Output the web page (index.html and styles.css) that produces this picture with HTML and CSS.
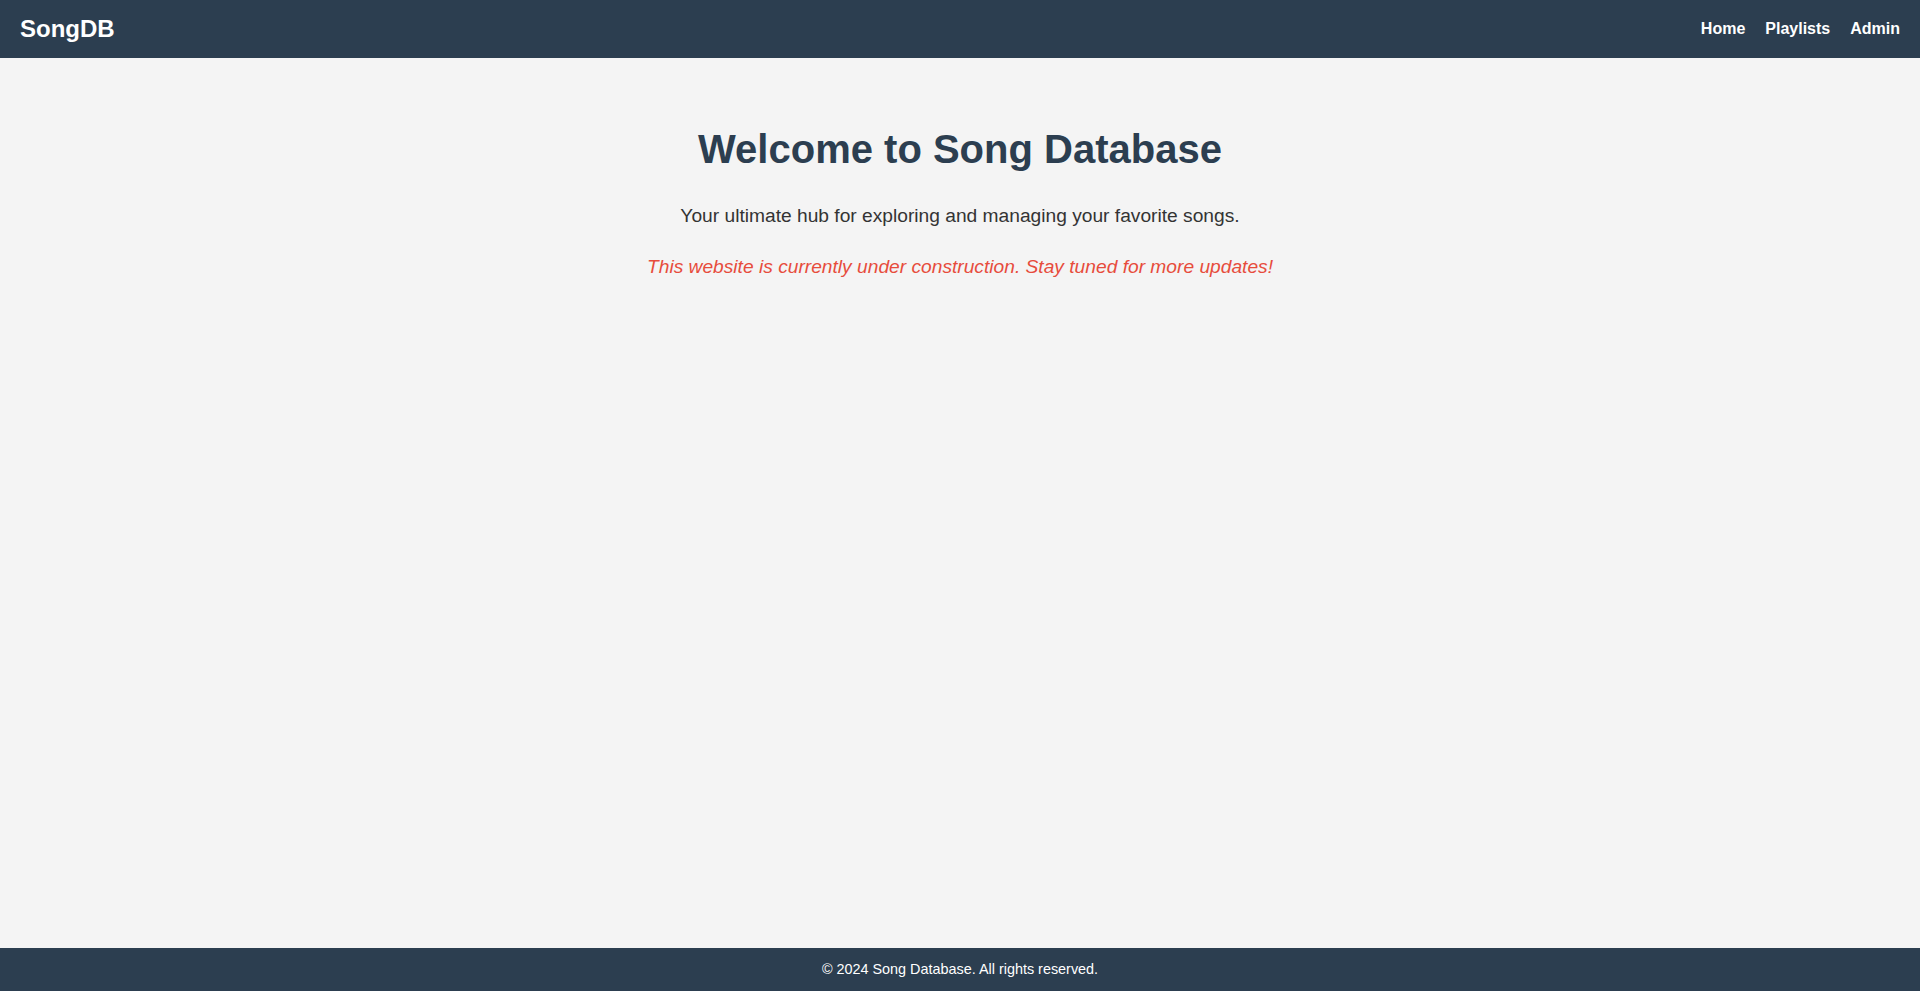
FILE: index.html
```html
<!DOCTYPE html>
<html lang="en">
<head>
<meta charset="utf-8">
<title>SongDB</title>
<link rel="stylesheet" href="styles.css">
</head>
<body>
<header class="site-header">
  <div class="brand">SongDB</div>
  <nav class="nav">
    <a href="#" class="nav-link">Home</a>
    <a href="#" class="nav-link">Playlists</a>
    <a href="#" class="nav-link">Admin</a>
  </nav>
</header>
<main class="main">
  <section class="hero">
    <h1 class="hero-title">Welcome to Song Database</h1>
    <p class="hero-sub">Your ultimate hub for exploring and managing your favorite songs.</p>
    <p class="hero-note">This website is currently under construction. Stay tuned for more updates!</p>
  </section>
</main>
<footer class="site-footer">
  <p class="footer-text">&copy; 2024 Song Database. All rights reserved.</p>
</footer>
</body>
</html>
```

FILE: styles.css
```css
html, body {
  margin: 0;
  padding: 0;
}
body {
  font-family: "Liberation Sans", Arial, sans-serif;
  background: #f4f4f4;
  color: #333;
  line-height: 1.6;
  min-height: 100vh;
  display: flex;
  flex-direction: column;
}
.site-header {
  background: #2c3e50;
  color: #fff;
  height: 58px;
  padding: 0 20px;
  display: flex;
  align-items: center;
  justify-content: space-between;
  box-sizing: border-box;
}
.brand {
  font-size: 24px;
  font-weight: bold;
  line-height: 1;
}
.nav {
  display: flex;
  gap: 20px;
}
.nav-link {
  color: #fff;
  text-decoration: none;
  font-weight: bold;
  font-size: 16px;
  line-height: 1;
}
.main {
  flex: 1;
  padding: 59px 20px 0;
}
.hero {
  text-align: center;
}
.hero-title {
  margin: 0 0 20px;
  font-size: 40px;
  color: #2c3e50;
  line-height: 1.6;
}
.hero-sub {
  margin: 0 0 20px;
  font-size: 19.2px;
}
.hero-note {
  margin: 0;
  font-size: 19.2px;
  font-style: italic;
  color: #e74c3c;
}
.site-footer {
  background: #2c3e50;
  color: #fff;
  text-align: center;
  padding: 10px 0;
}
.footer-text {
  margin: 0;
  font-size: 14.4px;
}
```
